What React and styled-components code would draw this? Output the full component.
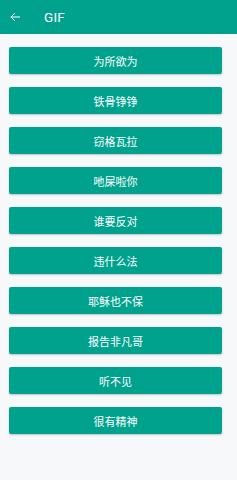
import React from 'react';
import styled, { createGlobalStyle } from 'styled-components';

const items = [
  '为所欲为',
  '铁骨铮铮',
  '窃格瓦拉',
  '吔屎啦你',
  '谁要反对',
  '违什么法',
  '耶稣也不保',
  '报告非凡哥',
  '听不见',
  '很有精神',
];

const App = () => {
  return (
    <Page>
      <GlobalStyle />
      <TopBar>
        <BackButton aria-label="back">
          <svg width="12" height="12" viewBox="0 0 24 24" fill="none" stroke="#fff" strokeWidth="2" strokeLinecap="square">
            <path d="M21 12H4" />
            <path d="M11 5l-7 7 7 7" />
          </svg>
        </BackButton>
        <Title>GIF</Title>
      </TopBar>
      <List>
        {items.map((t) => (
          <ItemButton key={t}>{t}</ItemButton>
        ))}
      </List>
    </Page>
  );
};

export default App;

const GlobalStyle = createGlobalStyle`
  html, body {
    margin: 0;
    padding: 0;
    background: #f7f8fa;
  }
  body {
    font-family: "Roboto", "Noto Sans CJK SC", sans-serif;
  }
`;

const Page = styled.div`
  width: 237px;
  min-height: 480px;
  background: #f7f8fa;
`;

const TopBar = styled.header`
  height: 34px;
  background: #00a28e;
  display: flex;
  align-items: center;
  padding-left: 9px;
  box-sizing: border-box;
`;

const BackButton = styled.div`
  width: 12px;
  height: 12px;
  display: flex;
  align-items: center;
  justify-content: center;
  margin-right: 23px;
  svg {
    display: block;
  }
`;

const Title = styled.h1`
  margin: 0;
  color: #fff;
  font-family: "Roboto", sans-serif;
  font-weight: 400;
  font-size: 13.5px;
  letter-spacing: 0.2px;
`;

const List = styled.div`
  display: flex;
  flex-direction: column;
  gap: 13px;
  padding: 13px 15px 0 9px;
`;

const ItemButton = styled.button`
  height: 27px;
  width: 213px;
  border: none;
  border-radius: 2px;
  background: #00a28e;
  color: #fff;
  font-family: "Noto Sans CJK SC", sans-serif;
  font-size: 11px;
  font-weight: 400;
  box-shadow: 0 1px 2px rgba(0, 0, 0, 0.22);
  padding: 0;
  cursor: pointer;
`;
